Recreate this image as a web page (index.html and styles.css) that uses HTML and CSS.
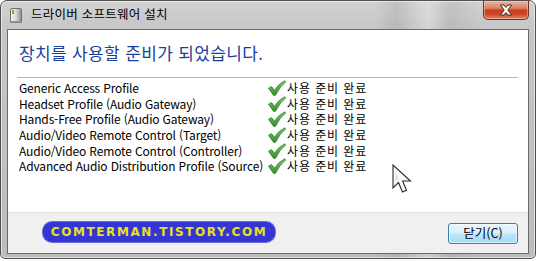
FILE: index.html
```html
<!DOCTYPE html>
<html lang="ko">
<head>
<meta charset="utf-8">
<title>드라이버 소프트웨어 설치</title>
<link rel="stylesheet" href="styles.css">
</head>
<body>
<div class="window">
  <div class="titlebar">
    <svg class="app-icon" width="14" height="17" viewBox="0 0 14 17">
      <defs>
        <linearGradient id="dev" x1="0" x2="1" y1="0" y2="0">
          <stop offset="0" stop-color="#f4f4f4"/>
          <stop offset="0.5" stop-color="#d8d8d8"/>
          <stop offset="1" stop-color="#8a8a8a"/>
        </linearGradient>
      </defs>
      <path d="M3 1.5 L11 1.5 Q12.5 1.5 12.5 3 L12.5 15.5 L1.5 15.5 L1.5 3 Q1.5 1.5 3 1.5 Z" fill="url(#dev)" stroke="#6d6d6d" stroke-width="1"/>
      <rect x="3" y="3" width="2" height="4" fill="#67b64a"/>
      <rect x="1.5" y="14" width="11" height="1.5" fill="#9a9a9a"/>
    </svg>
    <span class="title">드라이버 소프트웨어 설치</span>
    <div class="close-btn">
      <svg width="16" height="12" viewBox="0 0 16 12">
        <path d="M2.5 1 L6 1 L8 3.5 L10 1 L13.5 1 L9.8 6 L13.5 11 L10 11 L8 8.5 L6 11 L2.5 11 L6.2 6 Z" fill="#fff" stroke="#4a2a24" stroke-width="1" stroke-linejoin="round"/>
      </svg>
    </div>
  </div>
  <div class="client">
    <div class="content">
      <h1 class="main-instruction">장치를 사용할 준비가 되었습니다.</h1>
      <div class="separator"></div>
      <div class="profiles">
        <div class="row"><span class="name">Generic Access Profile</span><span class="status"><svg class="check" width="20" height="16" viewBox="0 0 20 16"><use href="#chk"/></svg>사용 준비 완료</span></div>
        <div class="row"><span class="name">Headset Profile (Audio Gateway)</span><span class="status"><svg class="check" width="20" height="16" viewBox="0 0 20 16"><use href="#chk"/></svg>사용 준비 완료</span></div>
        <div class="row"><span class="name">Hands-Free Profile (Audio Gateway)</span><span class="status"><svg class="check" width="20" height="16" viewBox="0 0 20 16"><use href="#chk"/></svg>사용 준비 완료</span></div>
        <div class="row"><span class="name">Audio/Video Remote Control (Target)</span><span class="status"><svg class="check" width="20" height="16" viewBox="0 0 20 16"><use href="#chk"/></svg>사용 준비 완료</span></div>
        <div class="row"><span class="name">Audio/Video Remote Control (Controller)</span><span class="status"><svg class="check" width="20" height="16" viewBox="0 0 20 16"><use href="#chk"/></svg>사용 준비 완료</span></div>
        <div class="row"><span class="name">Advanced Audio Distribution Profile (Source)</span><span class="status"><svg class="check" width="20" height="16" viewBox="0 0 20 16"><use href="#chk"/></svg>사용 준비 완료</span></div>
      </div>
      <svg class="cursor" width="22" height="32" viewBox="0 0 22 32">
        <path d="M1 1 L1 24 L6.5 18.5 L10.5 28 L14.5 26.3 L10.6 17 L18.5 17 Z" fill="#fafafa" stroke="#2a2a2a" stroke-width="1.1" stroke-linejoin="miter"/>
        <path d="M3 6 L3 19 L7 15 Z" fill="#e6e6e6"/>
      </svg>
    </div>
    <div class="footer">
      <div class="watermark">COMTERMAN.TISTORY.COM</div>
      <button class="btn">닫기(C)</button>
    </div>
  </div>
</div>
<svg width="0" height="0" class="defs">
  <defs>
    <linearGradient id="chkg" x1="0" x2="0" y1="0" y2="1">
      <stop offset="0" stop-color="#7fd06a"/>
      <stop offset="1" stop-color="#2e8f2a"/>
    </linearGradient>
    <path id="chk" d="M1.5 8.2 L4.5 6.6 L7.6 10.2 Q11.5 3.8 17.8 0.8 L18.6 2 Q12.6 6.8 8.6 15.2 L6.6 15.4 Z" fill="url(#chkg)" stroke="#2f7d29" stroke-width="0.8" stroke-linejoin="round"/>
  </defs>
</svg>
</body>
</html>
```

FILE: styles.css
```css
* { box-sizing: border-box; }

html, body {
  margin: 0;
  padding: 0;
  background: #ffffff;
}

body {
  width: 536px;
  height: 261px;
  overflow: hidden;
  font-family: "Noto Sans CJK KR", "Noto Sans", sans-serif;
}

.defs { position: absolute; }

.window {
  width: 536px;
  height: 259px;
  border: 1px solid #505050;
  border-radius: 7px 7px 5px 5px;
  background:
    linear-gradient(to right, rgba(255,255,255,0) 0%, rgba(255,255,255,0) 70%, rgba(120,120,120,0.18) 74%, rgba(255,255,255,0.25) 80%, rgba(140,140,140,0.2) 84%, rgba(255,255,255,0) 90%),
    linear-gradient(to bottom, #d2d2d2 0px, #c6c6c6 28px, #bcbcbc 100%);
  box-shadow: inset 0 0 0 1px rgba(255,255,255,0.55);
  padding: 0 6px 4px 6px;
  display: flex;
  flex-direction: column;
}

.titlebar {
  height: 28px;
  display: flex;
  align-items: flex-start;
  flex: none;
}

.app-icon {
  margin: 6px 0 0 2px;
  flex: none;
}

.title {
  margin: 5px 0 0 8px;
  font-size: 12.5px;
  line-height: 16px;
  color: #000;
  letter-spacing: 0.25px;
}

.close-btn {
  margin-left: auto;
  width: 46px;
  height: 19px;
  border: 1px solid #6e3124;
  border-top: none;
  border-radius: 0 0 5px 5px;
  background: linear-gradient(to bottom, #eab3a4 0%, #dc806a 40%, #c5401f 52%, #cc4a28 75%, #e08a6a 100%);
  box-shadow: inset 0 0 0 1px rgba(255,220,200,0.45);
  display: flex;
  align-items: center;
  justify-content: center;
}

.client {
  flex: 1;
  border: 1px solid #6a6a6a;
  background: #ffffff;
  display: flex;
  flex-direction: column;
}

.content {
  flex: 1;
  position: relative;
}

.main-instruction {
  margin: 0;
  padding: 12px 0 0 11px;
  height: 47px;
  font-size: 17px;
  line-height: 21px;
  font-weight: normal;
  color: #1a3f9c;
  letter-spacing: 0.35px;
}

.separator {
  height: 1px;
  margin: 0 10px 0 9px;
  background: #a8bccf;
}

.profiles {
  padding: 2px 0 0 11px;
  font-size: 12px;
  line-height: 15.7px;
  color: #000;
}

.row {
  display: flex;
  align-items: center;
  height: 15.7px;
}

.name {
  width: 248px;
  white-space: nowrap;
  letter-spacing: -0.15px;
}

.status {
  display: flex;
  align-items: center;
  white-space: nowrap;
  font-size: 12px;
  letter-spacing: 0.9px;
}

.check {
  flex: none;
}

.cursor {
  position: absolute;
  left: 384px;
  top: 134px;
}

.footer {
  height: 41px;
  flex: none;
  background: #f0f0f0;
  border-top: 1px solid #dfdfdf;
  display: flex;
  align-items: center;
  justify-content: space-between;
  padding: 0 10px 0 35px;
}

.watermark {
  width: 232px;
  height: 20px;
  margin-top: -2px;
  border-radius: 9px;
  background: #3535d2;
  box-shadow: 0 0 0 1px #6a6ae0;
  color: #e6e21e;
  font-family: "DejaVu Sans", sans-serif;
  font-weight: bold;
  font-size: 12px;
  letter-spacing: 1.6px;
  line-height: 20px;
  text-align: center;
}

.btn {
  width: 70px;
  height: 21px;
  padding: 0;
  border: 1px solid #3c7fb1;
  border-radius: 3px;
  background: linear-gradient(to bottom, #eaf6fd 0%, #d9f0fc 48%, #bee6fd 52%, #a7d9f5 100%);
  box-shadow: inset 0 0 0 1px rgba(255,255,255,0.6);
  font-family: "Noto Sans CJK KR", "Noto Sans", sans-serif;
  font-size: 12.5px;
  line-height: 18px;
  color: #000;
}
```
